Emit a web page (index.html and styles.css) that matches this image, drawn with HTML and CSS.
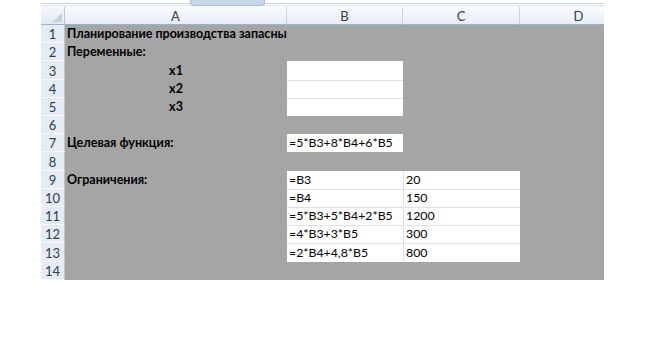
FILE: index.html
```html
<!DOCTYPE html>
<html lang="ru">
<head>
<meta charset="utf-8">
<title>Планирование производства запасны</title>
<link rel="stylesheet" href="styles.css">
</head>
<body>
<div class="sheet">
  <div class="topbar"><div class="tab"></div></div>
  <div class="grid">
    <div class="corner"><span class="tri"></span></div>
    <div class="ch">A</div><div class="ch">B</div><div class="ch">C</div><div class="ch last">D</div>

    <div class="rh">1</div><div class="c g b">Планирование производства запасны</div><div class="c g"></div><div class="c g"></div><div class="c g"></div>
    <div class="rh">2</div><div class="c g b">Переменные:</div><div class="c g"></div><div class="c g"></div><div class="c g"></div>
    <div class="rh">3</div><div class="c g b ctr">x1</div><div class="c w"></div><div class="c g"></div><div class="c g"></div>
    <div class="rh">4</div><div class="c g b ctr">x2</div><div class="c w t"></div><div class="c g"></div><div class="c g"></div>
    <div class="rh">5</div><div class="c g b ctr">x3</div><div class="c w t"></div><div class="c g"></div><div class="c g"></div>
    <div class="rh">6</div><div class="c g"></div><div class="c g"></div><div class="c g"></div><div class="c g"></div>
    <div class="rh">7</div><div class="c g b">Целевая функция:</div><div class="c w">=5*B3+8*B4+6*B5</div><div class="c g"></div><div class="c g"></div>
    <div class="rh">8</div><div class="c g"></div><div class="c g"></div><div class="c g"></div><div class="c g"></div>
    <div class="rh">9</div><div class="c g b">Ограничения:</div><div class="c w">=B3</div><div class="c w l">20</div><div class="c g"></div>
    <div class="rh">10</div><div class="c g"></div><div class="c w t">=B4</div><div class="c w t l">150</div><div class="c g"></div>
    <div class="rh">11</div><div class="c g"></div><div class="c w t">=5*B3+5*B4+2*B5</div><div class="c w t l">1200</div><div class="c g"></div>
    <div class="rh">12</div><div class="c g"></div><div class="c w t">=4*B3+3*B5</div><div class="c w t l">300</div><div class="c g"></div>
    <div class="rh">13</div><div class="c g"></div><div class="c w t">=2*B4+4,8*B5</div><div class="c w t l">800</div><div class="c g"></div>
    <div class="rh">14</div><div class="c g"></div><div class="c g"></div><div class="c g"></div><div class="c g"></div>
  </div>
</div>
</body>
</html>
```

FILE: styles.css
```css
html, body {
  margin: 0;
  padding: 0;
  background: #ffffff;
}

.sheet {
  margin-left: 41px;
  width: 563px;
  overflow: hidden;
  font-family: Lato, "Open Sans", sans-serif;
  font-size: 12.3px;
  color: #000;
}

.topbar {
  position: relative;
  height: 7px;
  box-sizing: border-box;
  border-top: 3px solid #ffffff;
  background: linear-gradient(#c9d3de 0, #c9d3de 1px, #ffffff 1px, #ffffff 2px, #dfe6ee 2px, #dfe6ee 3px, #f3f6fa 3px);
}

.tab {
  position: absolute;
  left: 149px;
  top: -3px;
  width: 73px;
  height: 5px;
  background: #c6d6ea;
  border: 1px solid #a9bdd5;
  border-top: none;
  border-radius: 0 0 4px 4px;
}

.grid {
  display: grid;
  grid-template-columns: 24px 222px 116px 117px 117px;
  grid-template-rows: 18px repeat(14, 18.21px);
  width: 596px;
}

.corner {
  position: relative;
  background: linear-gradient(#f4f7fb, #e3e9f1);
  border-right: 1px solid #b9c7d7;
  border-bottom: 1px solid #9fb2c7;
  box-sizing: border-box;
}

.tri {
  position: absolute;
  right: 2px;
  bottom: 2px;
  width: 0;
  height: 0;
  border-left: 9px solid transparent;
  border-bottom: 9px solid #c3ced9;
}

.ch {
  display: flex;
  align-items: center;
  justify-content: center;
  box-sizing: border-box;
  background: linear-gradient(#f9fbfd, #e6edf5);
  border-right: 1px solid #c8d2dd;
  border-bottom: 1px solid #9fb2c7;
  color: #333a44;
  font-size: 13px;
  padding-top: 1px;
}

.ch.last {
  border-right: none;
}

.rh {
  display: flex;
  align-items: center;
  justify-content: center;
  box-sizing: border-box;
  background: #e4ebf4;
  border-bottom: 1px solid #f7f9fc;
  border-right: 1px solid #b9c7d7;
  color: #333b47;
  font-size: 13px;
  padding-top: 1px;
}

.c {
  display: flex;
  align-items: flex-end;
  box-sizing: border-box;
  padding: 0 2px 2px;
  white-space: nowrap;
  line-height: 14px;
}

.g {
  background: #a5a5a5;
}

.w {
  background: #ffffff;
}

.t {
  border-top: 1px solid #dfe1e4;
}

.l {
  border-left: 1px solid #dfe1e4;
}

.b {
  position: relative;
  z-index: 1;
  font-weight: 700;
  font-size: 12.5px;
}

.ctr {
  justify-content: center;
}
```
